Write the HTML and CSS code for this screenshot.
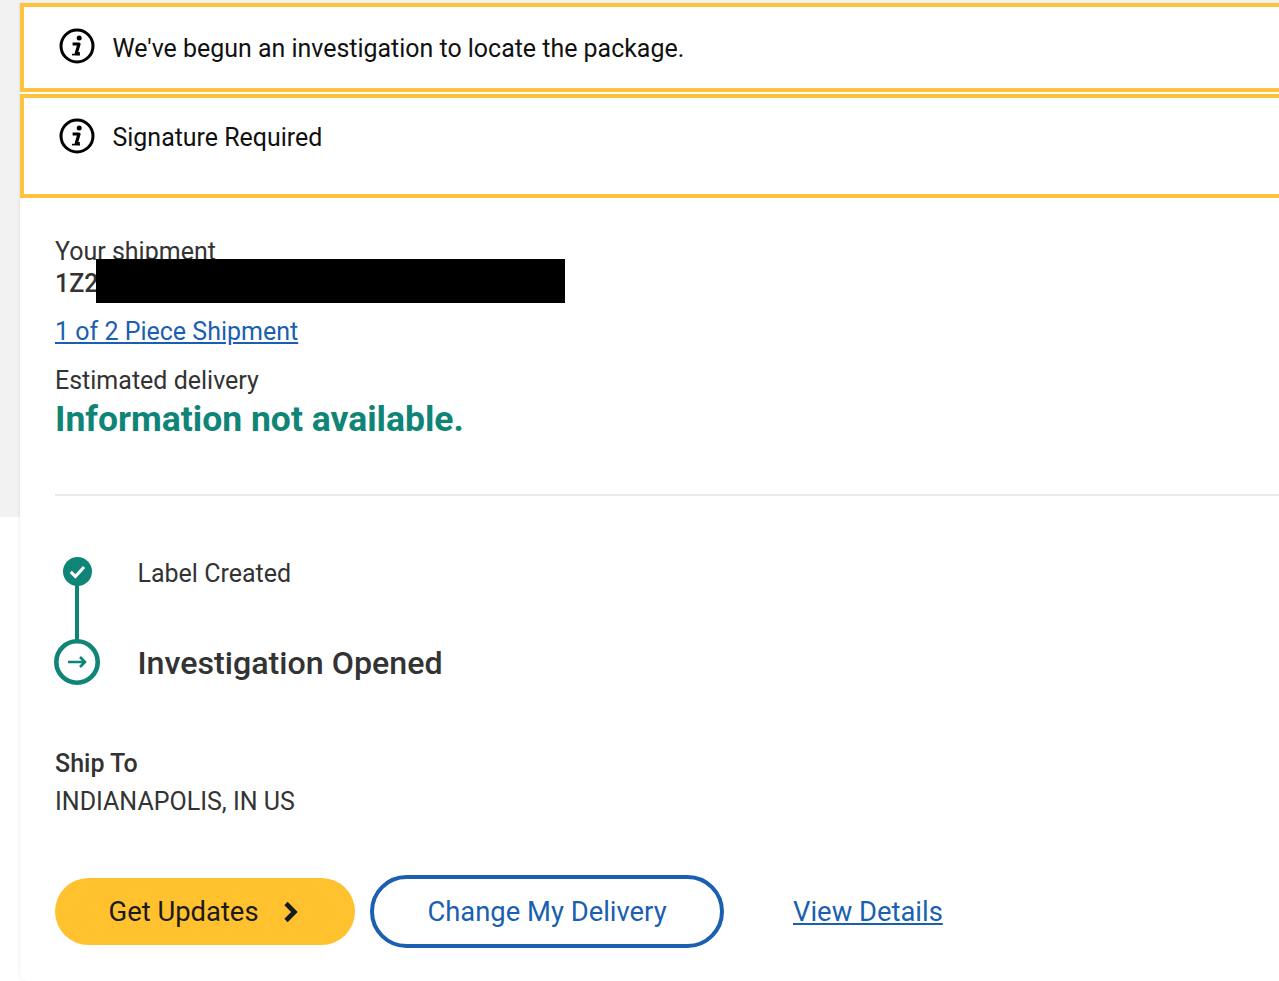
FILE: index.html
```html
<!DOCTYPE html>
<html lang="en">
<head>
<meta charset="utf-8">
<title>Track shipment</title>
<link rel="stylesheet" href="styles.css">
</head>
<body>
<main class="card">
  <div class="alert alert-first">
    <svg class="info" viewBox="0 0 36 36" aria-hidden="true"><circle cx="18" cy="18" r="16" fill="none" stroke="#000" stroke-width="3"/><circle cx="20.2" cy="10" r="2.5" fill="#000"/><path d="M13.6 16h6.4l-2.8 9.6h3.6" fill="none" stroke="#000" stroke-width="3.2" stroke-linejoin="round"/><path d="M13 26.6h8" stroke="#000" stroke-width="1.6"/></svg>
    <span>We've begun an investigation to locate the package.</span>
  </div>
  <div class="alert alert-second">
    <svg class="info" viewBox="0 0 36 36" aria-hidden="true"><circle cx="18" cy="18" r="16" fill="none" stroke="#000" stroke-width="3"/><circle cx="20.2" cy="10" r="2.5" fill="#000"/><path d="M13.6 16h6.4l-2.8 9.6h3.6" fill="none" stroke="#000" stroke-width="3.2" stroke-linejoin="round"/><path d="M13 26.6h8" stroke="#000" stroke-width="1.6"/></svg>
    <span>Signature Required</span>
  </div>
  <section class="content">
    <div class="tracking">
      <div class="t-label">Your shipment</div>
      <div class="t-number">1Z2XXXXXXXXXXXXXXX</div>
      <div class="redaction"></div>
    </div>
    <a class="piece" href="#">1 of 2 Piece Shipment</a>
    <div class="est-label">Estimated delivery</div>
    <div class="est-value">Information not available.</div>
    <hr class="divider">
    <ol class="steps">
      <li class="step step-done">
        <span class="marker"><svg class="check" viewBox="0 0 30 30" aria-hidden="true"><circle cx="15" cy="15" r="15" fill="#0f8577"/><path d="M8 15.5l4.8 4.6 9-9.8" fill="none" stroke="#fff" stroke-width="3.2"/></svg></span>
        <span class="step-text">Label Created</span>
      </li>
      <li class="step step-current">
        <span class="marker"><svg class="ring" viewBox="0 0 46 46" aria-hidden="true"><circle cx="23" cy="23" r="20.7" fill="#fff" stroke="#0f8577" stroke-width="4.6"/><path d="M14 23h17M26 18l5 5-5 5" fill="none" stroke="#0f8577" stroke-width="2.6"/></svg></span>
        <span class="step-text">Investigation Opened</span>
      </li>
    </ol>
    <div class="ship-head">Ship To</div>
    <div class="ship-value">INDIANAPOLIS, IN US</div>
    <div class="actions">
      <a class="btn btn-primary" href="#">Get Updates<svg class="chev" viewBox="0 0 16 22" aria-hidden="true"><path d="M3 2.5l8.5 8.5-8.5 8.5" fill="none" stroke="#1a1a1a" stroke-width="4.6"/></svg></a>
      <a class="btn btn-outline" href="#">Change My Delivery</a>
      <a class="details" href="#">View Details</a>
    </div>
  </section>
</main>
</body>
</html>
```
FILE: styles.css
```css
html, body { height: 100%; }
body {
  margin: 0;
  overflow: hidden;
  font-family: Roboto, "Liberation Sans", sans-serif;
  color: #333;
  background: #fff linear-gradient(#f2f2f2, #f2f2f2) no-repeat 0 0 / 100% 517px;
}
.card {
  box-sizing: border-box;
  margin: 3px -30px 0 20px;
  height: 978px;
  background: #fff;
  border-bottom-left-radius: 8px;
  box-shadow: -1px 0 3px rgba(0,0,0,.06);
}
.alert {
  box-sizing: border-box;
  border: 4px solid #fdc33c;
  display: flex;
  align-items: flex-start;
  padding-left: 34.5px;
  font-size: 24.95px;
  color: #111;
}
.alert span { line-height: 36px; margin-left: 18px; }
.alert-first { height: 89px; padding-top: 21px; }
.alert-second { height: 104px; margin-top: 2px; padding-top: 20px; }
.alert-first span { margin-top: 3px; }
.alert-second span { margin-top: 2px; }
.info { width: 36px; height: 36px; flex: none; }
.content { padding: 38px 0 0 35px; }
.tracking { position: relative; }
.t-label { font-size: 25px; line-height: 32px; }
.t-number { font-size: 25px; line-height: 32px; font-weight: 500; }
.redaction {
  position: absolute;
  left: 41px; top: 23px;
  width: 469px; height: 44px;
  background: #000;
}
.piece {
  display: block;
  width: max-content;
  margin-top: 16px;
  font-size: 25px;
  line-height: 32px;
  color: #1a5fb0;
}
.est-label { margin-top: 17px; font-size: 25px; line-height: 32px; }
.est-value { font-size: 35.5px; line-height: 44px; font-weight: 700; color: #0f8577; }
.divider { margin: 53px 0 0; border: 0; border-top: 2px solid #e9e9e9; }
.steps { list-style: none; margin: 0; padding: 0; }
.step { display: flex; align-items: center; position: relative; }
.marker { width: 46px; display: flex; justify-content: center; flex: none; margin: 0 37.5px 0 -1px; }
.step-done { margin-top: 61px; height: 32px; }
.step-done::after {
  content: "";
  position: absolute;
  left: 20px; top: 26px;
  width: 3.5px; height: 70px;
  background: #0f8577;
}
.check { width: 29px; height: 29px; margin-top: -4px; }
.step-current { margin-top: 50px; height: 46px; }
.ring { width: 46px; height: 46px; position: relative; z-index: 1; }
.step-text { font-size: 25px; }
.step-current .step-text { font-size: 32.2px; font-weight: 500; padding-top: 2px; }
.ship-head { margin-top: 63px; font-size: 25px; line-height: 32px; font-weight: 500; }
.ship-value { margin-top: 6px; font-size: 25px; line-height: 32px; }
.actions { display: flex; align-items: center; margin-top: 57px; }
.btn {
  box-sizing: border-box;
  display: flex;
  align-items: center;
  justify-content: center;
  text-decoration: none;
  font-size: 27.4px;
  border-radius: 40px;
}
.btn-primary { width: 300px; height: 67px; padding-right: 3px; background: #ffc12e; color: #1a1a1a; }
.chev { width: 16px; height: 22px; margin-left: 24px; }
.btn-outline { width: 354px; height: 73px; margin-left: 15px; border: 4px solid #1a5fb0; color: #1a5fb0; }
.details { margin-left: 69px; font-size: 27.4px; color: #1a5fb0; }
```
